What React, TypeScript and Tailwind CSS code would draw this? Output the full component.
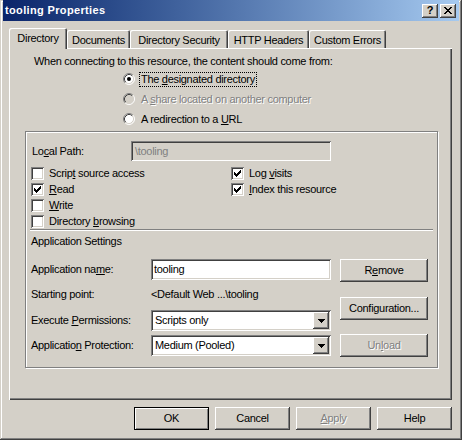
import React from "react";

const raised =
  "shadow-[inset_-1px_-1px_#404040,inset_1px_1px_#ffffff,inset_-2px_-2px_#808080,inset_2px_2px_#d4d0c8]";
const sunken =
  "shadow-[inset_1px_1px_#808080,inset_-1px_-1px_#ffffff,inset_2px_2px_#404040,inset_-2px_-2px_#d4d0c8]";
const dis = "text-[#808080] [text-shadow:1px_1px_0_#ffffff]";
const tabShadow =
  "shadow-[inset_1px_1px_#ffffff,inset_-1px_0_#404040,inset_-2px_0_#808080]";

function U({ children }: { children: React.ReactNode }) {
  return <span className="underline decoration-1 underline-offset-[1px]">{children}</span>;
}

function CheckMark() {
  return (
    <svg width="7" height="7" viewBox="0 0 7 7" shapeRendering="crispEdges">
      <rect x="0" y="2" width="1" height="3" fill="#000" />
      <rect x="1" y="3" width="1" height="3" fill="#000" />
      <rect x="2" y="4" width="1" height="3" fill="#000" />
      <rect x="3" y="3" width="1" height="3" fill="#000" />
      <rect x="4" y="2" width="1" height="3" fill="#000" />
      <rect x="5" y="1" width="1" height="3" fill="#000" />
      <rect x="6" y="0" width="1" height="3" fill="#000" />
    </svg>
  );
}

function Check({ checked, children }: { checked?: boolean; children: React.ReactNode }) {
  return (
    <div className="h-[16px] flex items-center gap-[5px]">
      <span className={`w-[13px] h-[13px] bg-white ${sunken} flex items-center justify-center shrink-0`}>
        {checked && <CheckMark />}
      </span>
      <span>{children}</span>
    </div>
  );
}

function Radio({ checked, disabled }: { checked?: boolean; disabled?: boolean }) {
  return (
    <svg width="12" height="12" viewBox="0 0 12 12" className="shrink-0">
      <circle cx="6" cy="6" r="5" fill={disabled ? "#d4d0c8" : "#ffffff"} />
      <path d="M2.11 9.89 A5.5 5.5 0 0 1 9.89 2.11" fill="none" stroke="#808080" />
      <path d="M9.89 2.11 A5.5 5.5 0 0 1 2.11 9.89" fill="none" stroke="#ffffff" />
      <path d="M2.82 9.18 A4.5 4.5 0 0 1 9.18 2.82" fill="none" stroke="#404040" />
      <path d="M9.18 2.82 A4.5 4.5 0 0 1 2.82 9.18" fill="none" stroke="#d4d0c8" />
      {checked && <circle cx="6" cy="6" r="2" fill="#000000" />}
    </svg>
  );
}

function Combo({ value }: { value: string }) {
  return (
    <div className={`w-[180px] h-[21px] bg-white ${sunken} flex items-center p-[2px]`}>
      <span className="flex-1 pl-[2px]">{value}</span>
      <span className={`w-[16px] h-full bg-[#d4d0c8] ${raised} flex items-center justify-center`}>
        <svg width="7" height="4" viewBox="0 0 7 4" shapeRendering="crispEdges">
          <rect x="0" y="0" width="7" height="1" fill="#000" />
          <rect x="1" y="1" width="5" height="1" fill="#000" />
          <rect x="2" y="2" width="3" height="1" fill="#000" />
          <rect x="3" y="3" width="1" height="1" fill="#000" />
        </svg>
      </span>
    </div>
  );
}

function Btn({
  children,
  className = "",
  disabled,
}: {
  children: React.ReactNode;
  className?: string;
  disabled?: boolean;
}) {
  return (
    <div
      className={`h-[23px] bg-[#d4d0c8] ${raised} flex items-center justify-center ${
        disabled ? dis : ""
      } ${className}`}
    >
      {children}
    </div>
  );
}

function XGlyph() {
  return (
    <svg width="8" height="7" viewBox="0 0 8 7" shapeRendering="crispEdges">
      <rect x="0" y="0" width="2" height="1" fill="#000" />
      <rect x="6" y="0" width="2" height="1" fill="#000" />
      <rect x="1" y="1" width="2" height="1" fill="#000" />
      <rect x="5" y="1" width="2" height="1" fill="#000" />
      <rect x="2" y="2" width="4" height="1" fill="#000" />
      <rect x="3" y="3" width="2" height="1" fill="#000" />
      <rect x="2" y="4" width="4" height="1" fill="#000" />
      <rect x="1" y="5" width="2" height="1" fill="#000" />
      <rect x="5" y="5" width="2" height="1" fill="#000" />
      <rect x="0" y="6" width="2" height="1" fill="#000" />
      <rect x="6" y="6" width="2" height="1" fill="#000" />
    </svg>
  );
}

export default function App() {
  return (
    <div className="w-[462px] h-[440px] overflow-hidden bg-[#d4d0c8] font-['Liberation_Sans',Arial,sans-serif] text-[11px] leading-[13px] tracking-[-0.3px] text-black flex flex-col px-[3px] shadow-[inset_-1px_-1px_#404040,inset_1px_1px_#d4d0c8,inset_-2px_-2px_#808080,inset_2px_2px_#ffffff]">
      {/* Title bar */}
      <div className="h-[21px] shrink-0 flex items-center bg-linear-to-r from-[#0a246a] to-[#a6caf0] pl-[2px] pr-[3px]">
        <span className="flex-1 text-white font-bold text-[11px] tracking-[0.35px]">tooling Properties</span>
        <div className="flex gap-[2px]">
          <span className={`w-[16px] h-[14px] ${raised} bg-[#d4d0c8] flex items-center justify-center font-bold text-[11px] leading-[11px] tracking-normal`}>
            ?
          </span>
          <span className={`w-[16px] h-[14px] ${raised} bg-[#d4d0c8] flex items-center justify-center`}>
            <XGlyph />
          </span>
        </div>
      </div>

      {/* Body */}
      <div className="pl-[6px] pr-[7px] pt-[7px] flex flex-col">
        {/* Tabs */}
        <div className="h-[20px] flex items-end">
          <div className={`relative z-10 -mb-px w-[58px] h-[21px] bg-[#d4d0c8] ${tabShadow} rounded-t-[2px] flex items-center justify-center pb-[1px]`}>
            Directory
          </div>
          <div className={`w-[63px] h-[18px] ${tabShadow} rounded-t-[2px] flex items-center justify-center pt-[2px]`}>
            Documents
          </div>
          <div className={`w-[98px] h-[18px] ${tabShadow} rounded-t-[2px] flex items-center justify-center pt-[2px]`}>
            Directory Security
          </div>
          <div className={`w-[81px] h-[18px] ${tabShadow} rounded-t-[2px] flex items-center justify-center pt-[2px]`}>
            HTTP Headers
          </div>
          <div className={`w-[77px] h-[18px] ${tabShadow} rounded-t-[2px] flex items-center justify-center pt-[2px]`}>
            Custom Errors
          </div>
        </div>

        {/* Panel */}
        <div className="h-[352px] flex flex-col pt-[7px] shadow-[inset_1px_1px_#ffffff,inset_-1px_-1px_#404040,inset_-2px_-2px_#808080]">
          <div className="ml-[25px] h-[13px]">
            When connecting to this resource, the content should come from:
          </div>
          <div className="ml-[114px] mt-[1px] flex flex-col">
            <div className="h-[20px] flex items-center gap-[4px]">
              <Radio checked />
              <span className="border border-dotted border-black px-[1px] leading-[13px]">
                The <U>d</U>esignated directory
              </span>
            </div>
            <div className="h-[20px] flex items-center gap-[6px]">
              <Radio disabled />
              <span className={dis}>
                A <U>s</U>hare located on another computer
              </span>
            </div>
            <div className="h-[20px] flex items-center gap-[6px]">
              <Radio />
              <span>
                A redirection to a <U>U</U>RL
              </span>
            </div>
          </div>

          {/* Group box */}
          <div className="mt-[2px] ml-[16px] w-[413px] h-[237px] border border-[#808080] shadow-[inset_1px_1px_#ffffff,1px_1px_#ffffff] flex flex-col">
            <div className="mt-[9px] h-[20px] flex items-center pl-[6px]">
              <span className="w-[99px]">
                Lo<U>c</U>al Path:
              </span>
              <div className={`w-[200px] h-[20px] bg-[#d4d0c8] ${sunken} flex items-center pl-[4px] text-[#808080]`}>
                \tooling
              </div>
            </div>

            <div className="mt-[4px] flex pl-[5px]">
              <div className="w-[200px] flex flex-col">
                <Check>
                  Scrip<U>t</U> source access
                </Check>
                <Check checked>
                  <U>R</U>ead
                </Check>
                <Check>
                  <U>W</U>rite
                </Check>
                <Check>
                  Directory <U>b</U>rowsing
                </Check>
              </div>
              <div className="flex flex-col">
                <Check checked>
                  Log <U>v</U>isits
                </Check>
                <Check checked>
                  <U>I</U>ndex this resource
                </Check>
              </div>
            </div>

            <div className="mx-[4px] h-[2px] border-t border-t-[#808080] border-b border-b-white" />

            <div className="mt-[4px] pl-[5px] h-[13px]">Application Settings</div>

            <div className="mt-[11px] pl-[5px] flex">
              <div className="w-[300px] flex flex-col">
                <div className="h-[21px] flex items-center">
                  <span className="w-[120px]">
                    Application na<U>m</U>e:
                  </span>
                  <div className={`w-[180px] h-[21px] bg-white ${sunken} flex items-center pl-[3px]`}>
                    tooling
                  </div>
                </div>
                <div className="mt-[8px] h-[13px] flex items-center">
                  <span className="w-[120px]">Starting point:</span>
                  <span>{"<Default Web ...\\tooling"}</span>
                </div>
                <div className="mt-[9px] h-[21px] flex items-center">
                  <span className="w-[120px]">
                    Execute <U>P</U>ermissions:
                  </span>
                  <Combo value="Scripts only" />
                </div>
                <div className="mt-[4px] h-[21px] flex items-center">
                  <span className="w-[120px]">
                    Applicatio<U>n</U> Protection:
                  </span>
                  <Combo value="Medium (Pooled)" />
                </div>
              </div>
              <div className="ml-[9px] flex flex-col">
                <Btn className="w-[88px]">
                  R<U>e</U>move
                </Btn>
                <Btn className="w-[88px] mt-[15px]">Configuration...</Btn>
                <Btn className="w-[88px] mt-[14px]" disabled>
                  Un<U>l</U>oad
                </Btn>
              </div>
            </div>
          </div>
        </div>

        {/* Bottom buttons */}
        <div className="mt-[7px] flex justify-end gap-[6px]">
          <div className="w-[75px] h-[23px] border border-black bg-[#d4d0c8] shadow-[inset_1px_1px_#ffffff,inset_-1px_-1px_#808080] flex items-center justify-center">
            OK
          </div>
          <Btn className="w-[75px]">Cancel</Btn>
          <Btn className="w-[75px]" disabled>
            <U>A</U>pply
          </Btn>
          <Btn className="w-[75px]">Help</Btn>
        </div>
      </div>
    </div>
  );
}
